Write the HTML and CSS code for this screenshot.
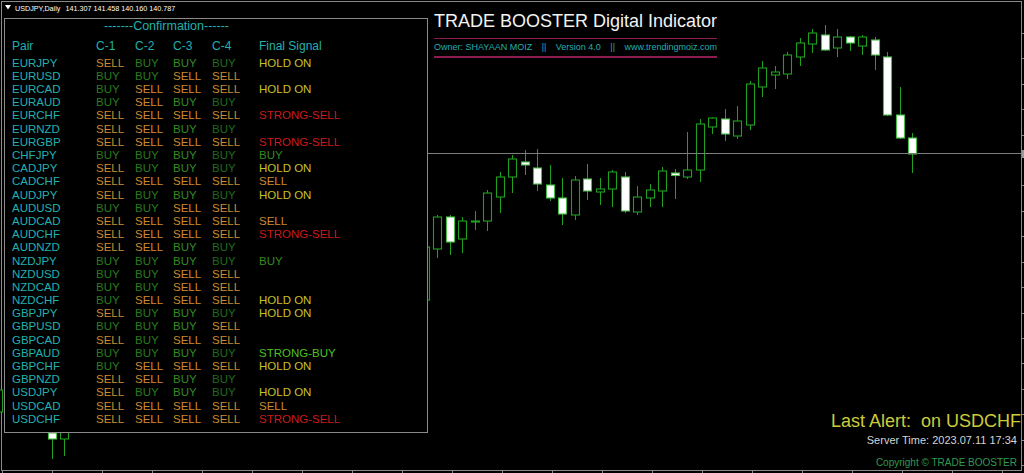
FILE: index.html
```html
<!DOCTYPE html>
<html lang="en">
<head>
<meta charset="utf-8">
<title>TRADE BOOSTER Digital Indicator</title>
<link rel="stylesheet" href="styles.css">
</head>
<body>
<div class="chart">
  <svg class="canvas" width="1024" height="473" viewBox="0 0 1024 473" aria-hidden="true">
    <rect class="frame" x="1.5" y="1.5" width="1020" height="469"/>
    <path class="ticks" d="M2.5 470V473M52.5 470V473M102.5 470V473M152.5 470V473M202.5 470V473M252.5 470V473M302.5 470V473M352.5 470V473M402.5 470V473M452.5 470V473M502.5 470V473M552.5 470V473M602.5 470V473M652.5 470V473M702.5 470V473M752.5 470V473M802.5 470V473M852.5 470V473M902.5 470V473M952.5 470V473M1002.5 470V473M1021 33.5H1024M1021 58.5H1024M1021 84.5H1024M1021 109.5H1024M1021 135.5H1024M1021 185.5H1024M1021 211.5H1024M1021 236.5H1024M1021 262.5H1024M1021 287.5H1024M1021 313.5H1024M1021 338.5H1024M1021 363.5H1024M1021 389.5H1024M1021 414.5H1024M1021 440.5H1024M1021 465.5H1024"/>
    <g class="candles">
      <line class="wk" x1="-1.5" y1="385" x2="-1.5" y2="420"/><rect class="h" x="-5.5" y="390" width="8" height="22"/>
      <line class="wk" x1="52.5" y1="426" x2="52.5" y2="459"/><rect class="w" x="48.5" y="433" width="8" height="6"/>
      <line class="wk" x1="64.5" y1="415" x2="64.5" y2="456"/><rect class="h" x="60.5" y="420" width="8" height="19"/>
      <line class="wk" x1="425.5" y1="240" x2="425.5" y2="310"/><rect class="h" x="421.5" y="247" width="8" height="53"/>
      <line class="wk" x1="437.5" y1="215" x2="437.5" y2="258"/><rect class="h" x="433.5" y="217" width="8" height="32"/>
      <line class="wk" x1="450.5" y1="215" x2="450.5" y2="255"/><rect class="w" x="446.5" y="217" width="8" height="25"/>
      <line class="wk" x1="462.5" y1="217" x2="462.5" y2="253"/><rect class="h" x="458.5" y="221" width="8" height="18"/>
      <line class="wk" x1="475.5" y1="211" x2="475.5" y2="230"/><rect class="h" x="471.5" y="221" width="8" height="1"/>
      <line class="wk" x1="487.5" y1="190" x2="487.5" y2="231"/><rect class="h" x="483.5" y="193" width="8" height="28"/>
      <line class="wk" x1="500.5" y1="172" x2="500.5" y2="213"/><rect class="h" x="496.5" y="177" width="8" height="20"/>
      <line class="wk" x1="512.5" y1="155" x2="512.5" y2="193"/><rect class="h" x="508.5" y="159" width="8" height="18"/>
      <line class="wk" x1="525.5" y1="150" x2="525.5" y2="175"/><rect class="w" x="521.5" y="162" width="8" height="3"/>
      <line class="wk" x1="537.5" y1="149" x2="537.5" y2="191"/><rect class="w" x="533.5" y="168" width="8" height="16"/>
      <line class="wk" x1="550.5" y1="165" x2="550.5" y2="201"/><rect class="w" x="546.5" y="185" width="8" height="13"/>
      <line class="wk" x1="562.5" y1="178" x2="562.5" y2="225"/><rect class="w" x="558.5" y="198" width="8" height="16"/>
      <line class="wk" x1="575.5" y1="176" x2="575.5" y2="220"/><rect class="h" x="571.5" y="180" width="8" height="35"/>
      <line class="wk" x1="587.5" y1="164" x2="587.5" y2="200"/><rect class="w" x="583.5" y="179" width="8" height="12"/>
      <line class="wk" x1="600.5" y1="178" x2="600.5" y2="205"/><rect class="h" x="596.5" y="189" width="8" height="3"/>
      <line class="wk" x1="612.5" y1="170" x2="612.5" y2="207"/><rect class="h" x="608.5" y="172" width="8" height="17"/>
      <line class="wk" x1="625.5" y1="172" x2="625.5" y2="213"/><rect class="w" x="621.5" y="177" width="8" height="34"/>
      <line class="wk" x1="637.5" y1="186" x2="637.5" y2="215"/><rect class="h" x="633.5" y="197" width="8" height="15"/>
      <line class="wk" x1="650.5" y1="184" x2="650.5" y2="207"/><rect class="h" x="646.5" y="190" width="8" height="8"/>
      <line class="wk" x1="662.5" y1="167" x2="662.5" y2="207"/><rect class="h" x="658.5" y="171" width="8" height="20"/>
      <line class="wk" x1="675.5" y1="169" x2="675.5" y2="199"/><rect class="w" x="671.5" y="173" width="8" height="2.5"/>
      <line class="wk" x1="687.5" y1="132" x2="687.5" y2="179"/><rect class="h" x="683.5" y="170" width="8" height="7"/>
      <line class="wk" x1="700.5" y1="119" x2="700.5" y2="182"/><rect class="h" x="696.5" y="124" width="8" height="46"/>
      <line class="wk" x1="712.5" y1="117" x2="712.5" y2="134"/><rect class="h" x="708.5" y="118" width="8" height="9"/>
      <line class="wk" x1="725.5" y1="109" x2="725.5" y2="141"/><rect class="w" x="721.5" y="119" width="8" height="15"/>
      <line class="wk" x1="737.5" y1="106" x2="737.5" y2="139"/><rect class="h" x="733.5" y="121" width="8" height="15"/>
      <line class="wk" x1="750.5" y1="81" x2="750.5" y2="130"/><rect class="h" x="746.5" y="84" width="8" height="41"/>
      <line class="wk" x1="762.5" y1="61" x2="762.5" y2="97"/><rect class="h" x="758.5" y="68" width="8" height="19"/>
      <line class="wk" x1="775.5" y1="66" x2="775.5" y2="89"/><rect class="h" x="771.5" y="72" width="8" height="3"/>
      <line class="wk" x1="787.5" y1="52" x2="787.5" y2="79"/><rect class="h" x="783.5" y="55" width="8" height="19"/>
      <line class="wk" x1="800.5" y1="38" x2="800.5" y2="66"/><rect class="h" x="796.5" y="43" width="8" height="14"/>
      <line class="wk" x1="812.5" y1="29" x2="812.5" y2="53"/><rect class="h" x="808.5" y="33" width="8" height="11"/>
      <line class="wk" x1="825.5" y1="25" x2="825.5" y2="51"/><rect class="w" x="821.5" y="35" width="8" height="15"/>
      <line class="wk" x1="837.5" y1="29" x2="837.5" y2="57"/><rect class="h" x="833.5" y="37" width="8" height="11"/>
      <line class="wk" x1="850.5" y1="36" x2="850.5" y2="51"/><rect class="w" x="846.5" y="37" width="8" height="6"/>
      <line class="wk" x1="862.5" y1="35" x2="862.5" y2="55"/><rect class="h" x="858.5" y="37" width="8" height="9"/>
      <line class="wk" x1="875.5" y1="37" x2="875.5" y2="70"/><rect class="w" x="871.5" y="40" width="8" height="15"/>
      <line class="wk" x1="887.5" y1="52" x2="887.5" y2="116"/><rect class="w" x="883.5" y="57" width="8" height="58"/>
      <line class="wk" x1="900.5" y1="87" x2="900.5" y2="139"/><rect class="w" x="896.5" y="115" width="8" height="23"/>
      <line class="wk" x1="912.5" y1="133" x2="912.5" y2="173"/><rect class="w" x="908.5" y="138" width="8" height="16"/>
    </g>
    <path class="price" d="M4 153.5H1021"/>
    <rect class="marker" x="1022" y="150" width="2" height="8"/>
  </svg>

  <div class="left">
    <div class="topbar">
      <svg class="tri" width="6" height="5" viewBox="0 0 6 5" aria-hidden="true"><path d="M0 0H6L3 4.5Z"/></svg>
      <span class="sym">USDJPY,Daily</span>
      <span class="ohlc">141.307 141.458 140.160 140.787</span>
    </div>

    <section class="panel">
      <div class="conf">-------Confirmation------</div>
      <div class="row thead"><span>Pair</span><span>C-1</span><span>C-2</span><span>C-3</span><span>C-4</span><span>Final Signal</span></div>
      <div class="tbody">
        <div class="row"><span class="p">EURJPY</span><span class="s">SELL</span><span class="b">BUY</span><span class="b">BUY</span><span class="b">BUY</span><span class="fh">HOLD ON</span></div>
        <div class="row"><span class="p">EURUSD</span><span class="b">BUY</span><span class="b">BUY</span><span class="s">SELL</span><span class="s">SELL</span><span></span></div>
        <div class="row"><span class="p">EURCAD</span><span class="b">BUY</span><span class="s">SELL</span><span class="s">SELL</span><span class="s">SELL</span><span class="fh">HOLD ON</span></div>
        <div class="row"><span class="p">EURAUD</span><span class="b">BUY</span><span class="s">SELL</span><span class="b">BUY</span><span class="b">BUY</span><span></span></div>
        <div class="row"><span class="p">EURCHF</span><span class="s">SELL</span><span class="s">SELL</span><span class="s">SELL</span><span class="s">SELL</span><span class="fss">STRONG-SELL</span></div>
        <div class="row"><span class="p">EURNZD</span><span class="s">SELL</span><span class="s">SELL</span><span class="b">BUY</span><span class="b">BUY</span><span></span></div>
        <div class="row"><span class="p">EURGBP</span><span class="s">SELL</span><span class="s">SELL</span><span class="s">SELL</span><span class="s">SELL</span><span class="fss">STRONG-SELL</span></div>
        <div class="row"><span class="p">CHFJPY</span><span class="b">BUY</span><span class="b">BUY</span><span class="b">BUY</span><span class="b">BUY</span><span class="fb">BUY</span></div>
        <div class="row"><span class="p">CADJPY</span><span class="s">SELL</span><span class="b">BUY</span><span class="b">BUY</span><span class="b">BUY</span><span class="fh">HOLD ON</span></div>
        <div class="row"><span class="p">CADCHF</span><span class="s">SELL</span><span class="s">SELL</span><span class="s">SELL</span><span class="s">SELL</span><span class="fs">SELL</span></div>
        <div class="row"><span class="p">AUDJPY</span><span class="s">SELL</span><span class="b">BUY</span><span class="b">BUY</span><span class="b">BUY</span><span class="fh">HOLD ON</span></div>
        <div class="row"><span class="p">AUDUSD</span><span class="b">BUY</span><span class="b">BUY</span><span class="s">SELL</span><span class="s">SELL</span><span></span></div>
        <div class="row"><span class="p">AUDCAD</span><span class="s">SELL</span><span class="s">SELL</span><span class="s">SELL</span><span class="s">SELL</span><span class="fs">SELL</span></div>
        <div class="row"><span class="p">AUDCHF</span><span class="s">SELL</span><span class="s">SELL</span><span class="s">SELL</span><span class="s">SELL</span><span class="fss">STRONG-SELL</span></div>
        <div class="row"><span class="p">AUDNZD</span><span class="s">SELL</span><span class="s">SELL</span><span class="b">BUY</span><span class="b">BUY</span><span></span></div>
        <div class="row"><span class="p">NZDJPY</span><span class="b">BUY</span><span class="b">BUY</span><span class="b">BUY</span><span class="b">BUY</span><span class="fb">BUY</span></div>
        <div class="row"><span class="p">NZDUSD</span><span class="b">BUY</span><span class="b">BUY</span><span class="s">SELL</span><span class="s">SELL</span><span></span></div>
        <div class="row"><span class="p">NZDCAD</span><span class="b">BUY</span><span class="b">BUY</span><span class="s">SELL</span><span class="s">SELL</span><span></span></div>
        <div class="row"><span class="p">NZDCHF</span><span class="b">BUY</span><span class="s">SELL</span><span class="s">SELL</span><span class="s">SELL</span><span class="fh">HOLD ON</span></div>
        <div class="row"><span class="p">GBPJPY</span><span class="s">SELL</span><span class="b">BUY</span><span class="b">BUY</span><span class="b">BUY</span><span class="fh">HOLD ON</span></div>
        <div class="row"><span class="p">GBPUSD</span><span class="b">BUY</span><span class="b">BUY</span><span class="b">BUY</span><span class="s">SELL</span><span></span></div>
        <div class="row"><span class="p">GBPCAD</span><span class="s">SELL</span><span class="b">BUY</span><span class="s">SELL</span><span class="s">SELL</span><span></span></div>
        <div class="row"><span class="p">GBPAUD</span><span class="b">BUY</span><span class="b">BUY</span><span class="b">BUY</span><span class="b">BUY</span><span class="fsb">STRONG-BUY</span></div>
        <div class="row"><span class="p">GBPCHF</span><span class="b">BUY</span><span class="s">SELL</span><span class="s">SELL</span><span class="s">SELL</span><span class="fh">HOLD ON</span></div>
        <div class="row"><span class="p">GBPNZD</span><span class="s">SELL</span><span class="s">SELL</span><span class="b">BUY</span><span class="b">BUY</span><span></span></div>
        <div class="row"><span class="p">USDJPY</span><span class="s">SELL</span><span class="b">BUY</span><span class="b">BUY</span><span class="b">BUY</span><span class="fh">HOLD ON</span></div>
        <div class="row"><span class="p">USDCAD</span><span class="s">SELL</span><span class="s">SELL</span><span class="s">SELL</span><span class="s">SELL</span><span class="fs">SELL</span></div>
        <div class="row"><span class="p">USDCHF</span><span class="s">SELL</span><span class="s">SELL</span><span class="s">SELL</span><span class="s">SELL</span><span class="fss">STRONG-SELL</span></div>
      </div>
    </section>
  </div>

  <div class="brand">
    <div class="title">TRADE BOOSTER Digital Indicator</div>
    <div class="rule"></div>
    <div class="sub"><span>Owner: SHAYAAN MOIZ</span><span>||</span><span>Version 4.0</span><span>||</span><span>www.trendingmoiz.com</span></div>
    <div class="rule rule2"></div>
  </div>

  <div class="status">
    <div class="alert">Last Alert:&nbsp; on USDCHF</div>
    <div class="server">Server Time: 2023.07.11 17:34</div>
    <div class="copy">Copyright © TRADE BOOSTER</div>
  </div>
</div>
</body>
</html>
```

FILE: styles.css
```css
* { box-sizing: border-box; }
html, body { margin: 0; padding: 0; background: #000; }
body {
  width: 1024px;
  height: 473px;
  overflow: hidden;
  font-family: "Liberation Sans", Arial, sans-serif;
}

.chart {
  position: relative;
  width: 1024px;
  height: 473px;
  padding: 3px 0 0 4px;
  display: flex;
  align-items: flex-start;
  gap: 6px;
}

/* chart canvas */
.canvas { position: absolute; left: 0; top: 0; }
.frame { fill: none; stroke: #8a8a8a; stroke-width: 1; }
.ticks { fill: none; stroke: #8a8a8a; stroke-width: 1; }
.price { fill: none; stroke: #7c7c7c; stroke-width: 1; }
.marker { fill: #9a9a9a; }
.wk { stroke: #1fa01f; stroke-width: 1; }
.h { fill: #000; stroke: #1fa01f; stroke-width: 1.1; }
.w { fill: #fff; stroke: #46c046; stroke-width: 1.1; }

/* left column */
.left {
  position: relative;
  z-index: 1;
  width: 424px;
  display: flex;
  flex-direction: column;
}
.topbar {
  height: 11px;
  line-height: 11px;
  margin-bottom: 4px;
  display: flex;
  align-items: flex-start;
  font-size: 7.2px;
  color: #fff;
  white-space: nowrap;
}
.tri { fill: #fff; margin: 2px 0 0 1px; flex: none; }
.sym { margin-left: 4px; }
.ohlc { margin-left: 5px; }

.panel {
  height: 414.7px;
  background: #000;
  border: 1px solid #8a8a8a;
  padding: 0 0 0 7px;
  color: #22b0b0;
}
.conf {
  height: 14px;
  line-height: 14px;
  font-size: 12.5px;
  padding-left: 92px;
  white-space: nowrap;
}
.row {
  display: grid;
  grid-template-columns: 84px 39px 38px 39px 47px 1fr;
  height: 13.2px;
  line-height: 13.2px;
  font-size: 11.5px;
  white-space: nowrap;
}
.thead { margin-top: 6.5px; font-size: 12px; color: #22b0b0; }
.tbody { margin-top: 4px; }

.p { color: #22b0b0; }
.s { color: #cc8a30; }
.b { color: #2a7a1e; }
.row > .b:nth-child(4) { color: #348a24; }
.row > .b:nth-child(5) { color: #206a1e; }
.fh { color: #c8c028; }
.fss { color: #cc1a1a; }
.fsb { color: #4ec020; }
.fb { color: #358a1e; }
.fs { color: #cc8a30; }

/* brand block */
.brand {
  position: relative;
  z-index: 1;
  width: 283px;
  padding-top: 7.75px;
}
.title {
  font-size: 18px;
  line-height: 20px;
  color: #f2f2f2;
  white-space: nowrap;
}
.rule { height: 1.5px; background: #8b1d4f; margin-top: 7px; }
.rule2 { margin-top: 2.75px; }
.sub {
  margin-top: 3px;
  height: 11px;
  line-height: 11px;
  font-size: 9px;
  color: #22aeb0;
  display: flex;
  justify-content: space-between;
  white-space: nowrap;
}

/* status block (overlay, bottom right) */
.status {
  position: absolute;
  right: 3px;
  top: 411px;
  z-index: 1;
  display: flex;
  flex-direction: column;
  align-items: flex-end;
  white-space: nowrap;
}
.alert { font-size: 18px; line-height: 20px; color: #cccc3a; }
.server { font-size: 11px; line-height: 13px; color: #d4d4d4; margin-top: 3px; margin-right: 4px; }
.copy { font-size: 10px; line-height: 12px; color: #2f9a52; margin-top: 9.6px; margin-right: 4px; }
```
